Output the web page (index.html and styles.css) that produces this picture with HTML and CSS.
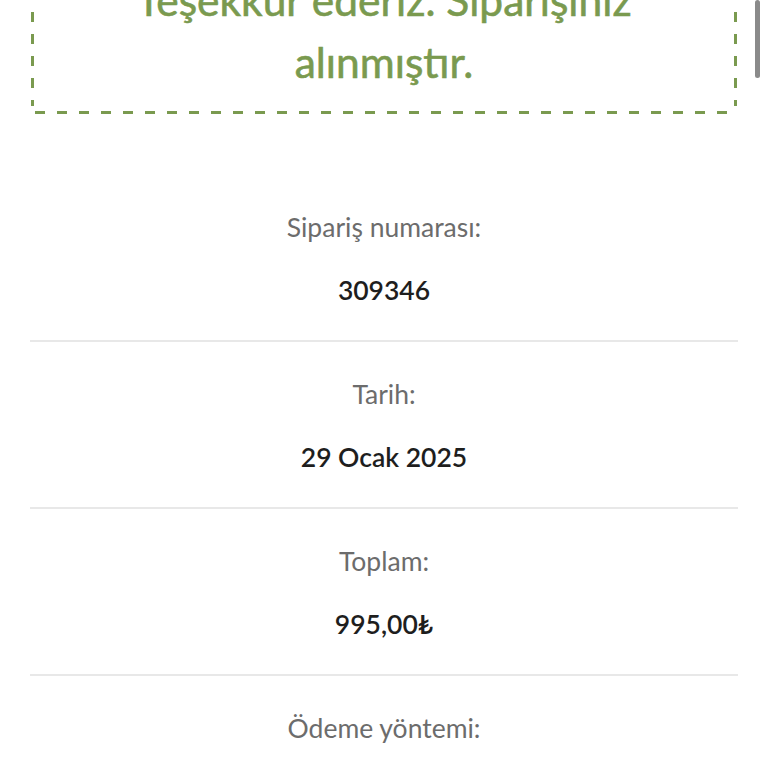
FILE: index.html
```html
<!DOCTYPE html>
<html lang="tr">
<head>
<meta charset="utf-8">
<link rel="stylesheet" href="styles.css">
</head>
<body>
<div class="page">
  <div class="notice">Teşekkür ederiz. Siparişiniz alınmıştır.</div>
  <ul class="details">
    <li class="row"><div class="label">Sipariş numarası:</div><div class="value">309346</div></li>
    <li class="row"><div class="label">Tarih:</div><div class="value">29 Ocak 2025</div></li>
    <li class="row"><div class="label">Toplam:</div><div class="value">995,00₺</div></li>
    <li class="row"><div class="label">Ödeme yöntemi:</div></li>
  </ul>
</div>
<div class="scrollbar"></div>
</body>
</html>
```
FILE: styles.css
```css
html, body {
  margin: 0;
  padding: 0;
  background: #ffffff;
  overflow: hidden;
}
body {
  font-family: Lato, "Open Sans", sans-serif;
  height: 768px;
}
.page {
  padding: 0 30px;
}
.notice {
  margin: -54px 1px 0;
  padding: 23px 40px 21px;
  color: #7a9a4f;
  font-size: 42.5px;
  line-height: 62px;
  text-align: center;
  -webkit-text-stroke: 0.6px #7a9a4f;
  background:
    repeating-linear-gradient(90deg, #7a9a4f 0 10px, transparent 10px 22px) 4px bottom / 100% 3px no-repeat,
    repeating-linear-gradient(180deg, #7a9a4f 0 10px, transparent 10px 22px) left top / 3px calc(100% - 8px) no-repeat,
    repeating-linear-gradient(180deg, #7a9a4f 0 10px, transparent 10px 22px) right top / 3px calc(100% - 8px) no-repeat;
}
.details {
  list-style: none;
  margin: 61px 0 0;
  padding: 0;
}
.row {
  padding: 37px 0 35px;
  border-bottom: 2px solid #e8e8e8;
  text-align: center;
}
.label {
  font-size: 26.5px;
  line-height: 30px;
  color: #6c6c6c;
}
.value {
  margin-top: 33px;
  font-size: 26.5px;
  line-height: 30px;
  font-weight: 600;
  color: #1e1e1e;
}
.scrollbar {
  position: absolute;
  top: 0;
  left: 755px;
  width: 5px;
  height: 78px;
  border-radius: 3px;
  background: #8a8a8a;
}
```
